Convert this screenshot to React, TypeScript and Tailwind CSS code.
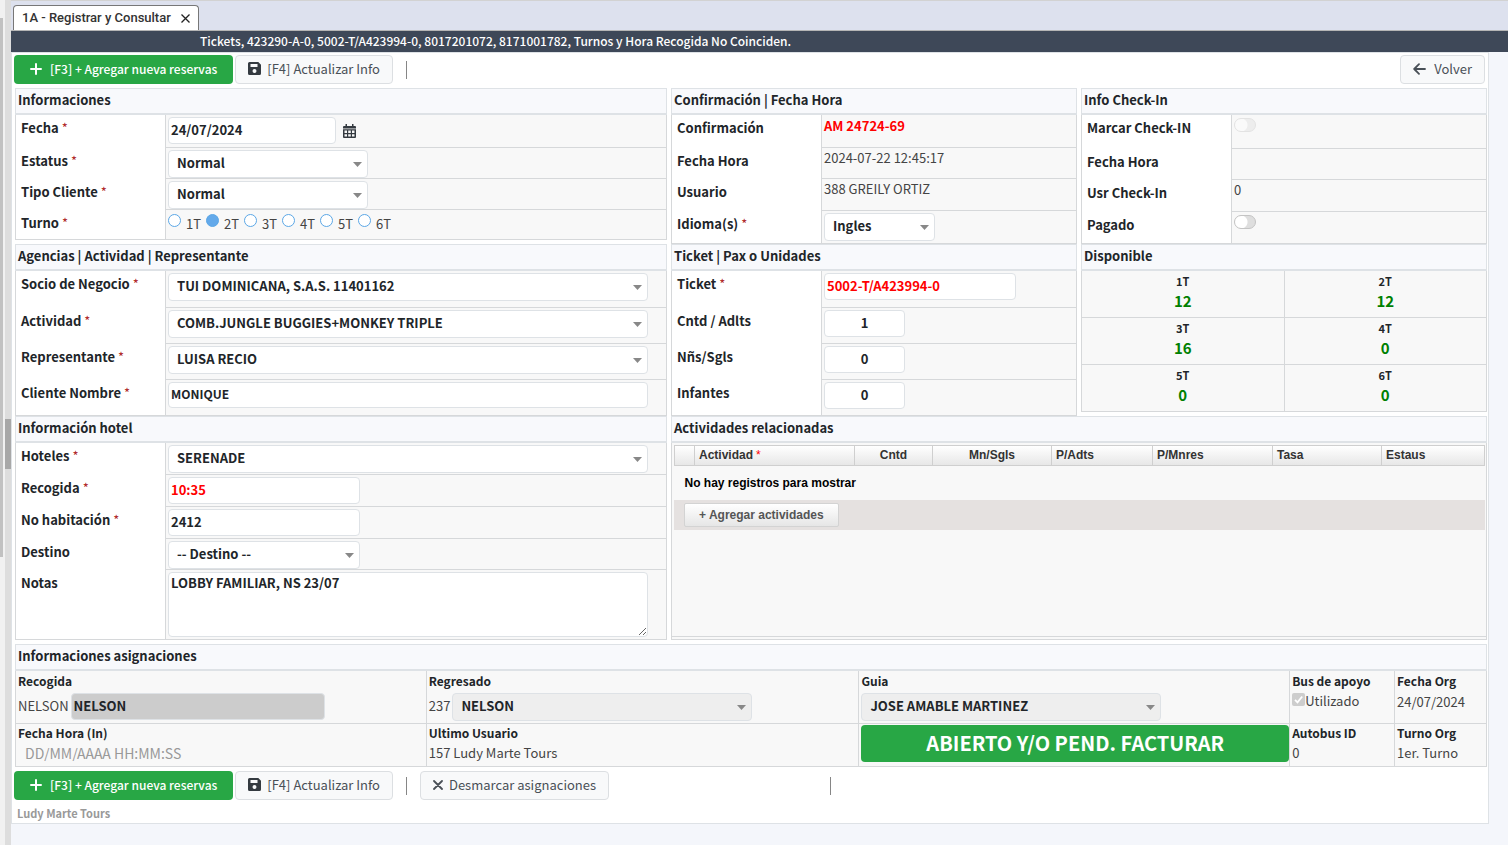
import React from 'react'

const cjk = 'font-["Noto_Sans_CJK_SC","Source_Sans_Pro",sans-serif]'

const box = 'rounded border border-[#dee2e6] font-bold leading-4 outline-none'
const input = `${box} bg-white px-0.5 pb-0.5 text-[13px]`
const inputRed = `${input} text-[#f00]`
const inputNumber = `${box} h-[27px] w-[81px] bg-white pb-0.5 text-center text-[13px]`

function Panel({ title, className = '', children }: { title: string, className?: string, children: React.ReactNode }) {
  return (
    <section className={`flex min-w-0 flex-col ${className}`}>
      <h2 className="h-[27px] shrink-0 border border-b-2 border-[#dee2e6] bg-[#f8f9fc] px-0.5 text-[13px] leading-[22px] font-bold">{title}</h2>
      {children}
    </section>
  )
}

function Field({ label, id, required, height, children }: { label: string, id?: string, required?: boolean, height: string, children?: React.ReactNode }) {
  return (
    <div className={`group flex border-x border-[#d6d8da] ${height}`}>
      <div className="w-[149px] shrink-0 bg-white pt-[5px] pl-[5px] leading-4 font-bold group-last:border-b group-last:border-[#d6d8da]">
        <label htmlFor={id}>
          {label}
          {required && <span className="pl-[3px] align-top leading-4 font-normal text-[#b02a2a]">*</span>}
        </label>
      </div>
      <div className="flex min-w-0 flex-1 items-start border-b border-l border-[#d6d8da] bg-[#f8f8f8] px-0.5 pt-0.5">{children}</div>
    </div>
  )
}

function Select({ id, value, width, disabled }: { id: string, value: string, width: string, disabled?: boolean }) {
  return (
    <span className={`relative inline-block ${width}`}>
      <select
        id={id}
        disabled={disabled}
        className={`${box} block h-7 w-full appearance-none pr-5 pb-0.5 pl-2 text-[13px] opacity-100 ${disabled ? 'bg-[#eeeeee]' : 'bg-white'}`}
      >
        <option>{value}</option>
      </select>
      <svg className="pointer-events-none absolute top-3 right-1.5" width="9" height="5" viewBox="0 0 9 5">
        <path d="M0 0h9L4.5 5z" fill="#888" />
      </svg>
    </span>
  )
}

function PlusIcon() {
  return (
    <svg width="12" height="12" viewBox="0 0 12 12" fill="none" stroke="currentColor" strokeWidth="2" strokeLinecap="round">
      <path d="M6 1v10M1 6h10" />
    </svg>
  )
}

function SaveIcon() {
  return (
    <svg width="13" height="13" viewBox="0 0 13 13">
      <path fillRule="evenodd" fill="#343a40" d="M1.5 0h8.8L13 2.7v8.8a1.5 1.5 0 0 1-1.5 1.5h-10A1.5 1.5 0 0 1 0 11.5v-10A1.5 1.5 0 0 1 1.5 0zM2.500 2v3h7V2zM6.500 7a2 2 0 1 0 0 4 2 2 0 0 0 0-4z" />
    </svg>
  )
}

function CalendarIcon() {
  return (
    <svg width="13" height="14" viewBox="0 0 13 14">
      <path fill="#343a40" d="M2.500 0h1.500v2H9V0h1.500v2H12a1 1 0 0 1 1 1v1.500H0V3a1 1 0 0 1 1-1h1.500zM0 5.300h13V13a1 1 0 0 1-1 1H1a1 1 0 0 1-1-1z" />
      <path fill="#f8f8f8" d="M1.500 6.500h2.500v2.500H1.500zM5.200 6.500h2.600v2.500H5.200zM9 6.500h2.500v2.500H9zM1.500 10.200h2.500v2.300H1.500zM5.200 10.200h2.600v2.300H5.200zM9 10.200h2.500v2.300H9z" />
    </svg>
  )
}

const lightButton = 'flex h-[29px] items-center rounded border border-[#dcdfe2] bg-[#f8f9fa] px-3 pb-0.5 text-[13px] leading-4 text-[#495057]'

function MainButtons() {
  return (
    <>
      <button className="flex h-[29px] items-center gap-2 rounded bg-[#28a745] px-4 pb-0.5 text-[12px] leading-4 font-medium text-white">
        <PlusIcon />
        [F3] + Agregar nueva reservas
      </button>
      <button className={`${lightButton} ml-0.5 gap-1.5`}>
        <SaveIcon />
        [F4] Actualizar Info
      </button>
      <span className="ml-[13px] h-[18px] w-px bg-[#868686]" />
    </>
  )
}

function Toggle({ id, disabled }: { id: string, disabled?: boolean }) {
  return (
    <input
      id={id}
      type="checkbox"
      role="switch"
      disabled={disabled}
      className="mt-px h-3.5 w-[22px] appearance-none rounded-full border border-[#c4c4c4] bg-[#dedede] bg-[radial-gradient(circle_at_6px_6px,#fff_6px,transparent_7px)] disabled:opacity-40"
    />
  )
}

const turnos = ['1T', '2T', '3T', '4T', '5T', '6T']

const disponibles = [
  { turno: '1T', cantidad: 12 },
  { turno: '2T', cantidad: 12 },
  { turno: '3T', cantidad: 16 },
  { turno: '4T', cantidad: 0 },
  { turno: '5T', cantidad: 0 },
  { turno: '6T', cantidad: 0 },
]

const columnas = [
  { titulo: '', ancho: 'w-5' },
  { titulo: 'Actividad', ancho: 'w-[160px]' },
  { titulo: 'Cntd', ancho: 'w-[78px] text-center' },
  { titulo: 'Mn/Sgls', ancho: 'w-[119px] text-center' },
  { titulo: 'P/Adts', ancho: 'w-[101px]' },
  { titulo: 'P/Mnres', ancho: 'w-[120px]' },
  { titulo: 'Tasa', ancho: 'w-[109px]' },
  { titulo: 'Estaus', ancho: '' },
]

export default function App() {
  return (
    <div className={`flex min-h-screen bg-[#f4f6fb] text-[13px] leading-4 text-[#212529] ${cjk}`}>
      <div className="w-[3px] shrink-0 bg-[#f1f1f1] pt-[18px]">
        <div className="h-[539px] bg-[#c1c1c1]" />
      </div>
      <div className="w-0.5 shrink-0 bg-[#f1f1f1]" />
      <div className="w-1.5 shrink-0 bg-[#dddddd] pt-[419px]">
        <div className="h-[50px] bg-[#a8a8a8]" />
      </div>

      <main className="min-w-0 flex-1">
        <div className="flex h-[31px] items-end border-t border-b border-t-[#d2d2d2] border-b-[#b5b5b5] bg-[#dde1ee] pl-0.5">
          <div className="flex h-[25px] items-center gap-2.5 rounded-t border border-b-0 border-[#777] bg-white px-2 font-['Roboto',sans-serif] text-[13px] font-medium text-[#333]">
            1A - Registrar y Consultar
            <button aria-label="Cerrar">
              <svg width="9" height="9" viewBox="0 0 9 9" stroke="#222" strokeWidth="1.300">
                <path d="M.5.5l8 8M8.500.5l-8 8" />
              </svg>
            </button>
          </div>
        </div>
        <div className="h-[21px] bg-[#3e4858] pl-[189px] text-[12px] leading-[19px] font-medium text-white">
          Tickets, 423290-A-0, 5002-T/A423994-0, 8017201072, 8171001782, Turnos y Hora Recogida No Coinciden.
        </div>

        <div className="mr-[19px] border border-[#dee2e6] bg-white pr-px pb-0.5">
          <div className="flex h-[35px] items-center pb-0.5 pl-0.5">
            <MainButtons />
            <button className={`${lightButton} mr-0.5 ml-auto gap-2`}>
              <svg width="13" height="12" viewBox="0 0 13 12" fill="none" stroke="currentColor" strokeWidth="1.800" strokeLinecap="round" strokeLinejoin="round">
                <path d="M12 6H1.500M6 1.200L1.200 6 6 10.800" />
              </svg>
              Volver
            </button>
          </div>

          <div className="pl-[3px]">
            <div className="grid grid-cols-[652fr_406fr_406fr] gap-x-1">
              <Panel title="Informaciones">
                <Field label="Fecha" id="fecha" required height="h-[33px]">
                  <input id="fecha" className={`${input} h-[27px] w-[168px]`} defaultValue="24/07/2024" />
                  <button aria-label="Abrir calendario" className="mt-[7px] ml-[7px]">
                    <CalendarIcon />
                  </button>
                </Field>
                <Field label="Estatus" id="estatus" required height="h-[31px]">
                  <Select id="estatus" value="Normal" width="w-[200px]" />
                </Field>
                <Field label="Tipo Cliente" id="tipo" required height="h-[31px]">
                  <Select id="tipo" value="Normal" width="w-[200px]" />
                </Field>
                <Field label="Turno" required height="h-[30px]">
                  <div className="flex pt-0.5">
                    {turnos.map((t) => (
                      <label key={t} className="flex w-[38px] gap-[5px] text-[#444]">
                        <input
                          type="radio"
                          name="turno"
                          defaultChecked={t === '2T'}
                          className="size-[13px] shrink-0 appearance-none rounded-full border border-[#5ba7e6] bg-white checked:bg-[#63a9ea]"
                        />
                        <span className="pt-0.5">{t}</span>
                      </label>
                    ))}
                  </div>
                </Field>
              </Panel>

              <Panel title="Confirmación | Fecha Hora">
                <Field label="Confirmación" height="h-[33px]">
                  <span className="pt-px font-bold text-[#f00]">AM 24724-69</span>
                </Field>
                <Field label="Fecha Hora" height="h-[31px]">
                  <span className="text-[#444]">2024-07-22 12:45:17</span>
                </Field>
                <Field label="Usuario" height="h-[32px]">
                  <span className="text-[#444]">388 GREILY ORTIZ</span>
                </Field>
                <Field label="Idioma(s)" id="idioma" required height="h-[33px]">
                  <Select id="idioma" value="Ingles" width="w-[111px]" />
                </Field>
              </Panel>

              <Panel title="Info Check-In">
                <Field label="Marcar Check-IN" id="checkin" height="h-[34px]">
                  <Toggle id="checkin" disabled />
                </Field>
                <Field label="Fecha Hora" height="h-[31px]" />
                <Field label="Usr Check-In" height="h-[32px]">
                  <span className="text-[#444]">0</span>
                </Field>
                <Field label="Pagado" id="pagado" height="h-[32px]">
                  <Toggle id="pagado" />
                </Field>
              </Panel>

              <Panel title="Agencias | Actividad | Representante">
                <Field label="Socio de Negocio" id="socio" required height="h-[37px]">
                  <Select id="socio" value="TUI DOMINICANA, S.A.S. 11401162" width="w-[480px]" />
                </Field>
                <Field label="Actividad" id="actividad" required height="h-[36px]">
                  <Select id="actividad" value="COMB.JUNGLE BUGGIES+MONKEY TRIPLE" width="w-[480px]" />
                </Field>
                <Field label="Representante" id="representante" required height="h-[36px]">
                  <Select id="representante" value="LUISA RECIO" width="w-[480px]" />
                </Field>
                <Field label="Cliente Nombre" id="cliente" required height="h-[36px]">
                  <input id="cliente" className={`${box} h-[26px] w-[480px] bg-white px-0.5 pb-1 text-[12px]`} defaultValue="MONIQUE" />
                </Field>
              </Panel>

              <Panel title="Ticket | Pax o Unidades">
                <Field label="Ticket" id="ticket" required height="h-[37px]">
                  <input id="ticket" className={`${inputRed} h-[27px] w-[192px]`} defaultValue="5002-T/A423994-0" />
                </Field>
                <Field label="Cntd / Adlts" id="adultos" height="h-[36px]">
                  <input id="adultos" className={inputNumber} defaultValue="1" />
                </Field>
                <Field label="Nñs/Sgls" id="ninos" height="h-[36px]">
                  <input id="ninos" className={inputNumber} defaultValue="0" />
                </Field>
                <Field label="Infantes" id="infantes" height="h-[36px]">
                  <input id="infantes" className={inputNumber} defaultValue="0" />
                </Field>
              </Panel>

              <Panel title="Disponible">
                <div className="grid grid-cols-2 border-l border-[#d6d8da] bg-[#f8f8f8] text-center font-bold">
                  {disponibles.map((d) => (
                    <div key={d.turno} className="h-[47px] border-r border-b border-[#d6d8da] pt-1">
                      <div className="text-[11px] leading-3">{d.turno}</div>
                      <div className="pt-1 text-[15px] leading-5 text-[#008000]">{d.cantidad}</div>
                    </div>
                  ))}
                </div>
              </Panel>
            </div>

            <div className="grid grid-cols-[652fr_816fr] gap-x-1">
              <Panel title="Información hotel">
                <Field label="Hoteles" id="hotel" required height="h-[32px]">
                  <Select id="hotel" value="SERENADE" width="w-[480px]" />
                </Field>
                <Field label="Recogida" id="recogida" required height="h-[32px]">
                  <input id="recogida" className={`${inputRed} h-[27px] w-[192px]`} defaultValue="10:35" />
                </Field>
                <Field label="No habitación" id="habitacion" required height="h-[32px]">
                  <input id="habitacion" className={`${input} h-[27px] w-[192px]`} defaultValue="2412" />
                </Field>
                <Field label="Destino" id="destino" height="h-[31px]">
                  <Select id="destino" value="-- Destino --" width="w-[192px]" />
                </Field>
                <Field label="Notas" id="notas" height="h-[70px]">
                  <textarea id="notas" className={`${input} h-[65px] w-[480px] pt-0.5`} defaultValue="LOBBY FAMILIAR, NS 23/07" />
                </Field>
              </Panel>

              <Panel title="Actividades relacionadas">
                <div className="flex-1 border border-t-0 border-[#d6d8da] bg-[#f8f8f8] pb-0.5 font-['Liberation_Sans',sans-serif] text-[12px]">
                  <div className="h-full border-b border-[#d6d8da] pt-0.5 pr-px pl-0.5">
                    <table className="w-full table-fixed border-collapse">
                      <thead>
                        <tr className="h-5 bg-linear-to-b from-white to-[#e6e6e6] text-left text-[#333]">
                          {columnas.map((c) => (
                            <th key={c.titulo} className={`border border-[#cfcfcf] px-1 pb-px leading-[18px] font-bold ${c.ancho}`}>
                              {c.titulo}
                              {c.titulo === 'Actividad' && <span className="pl-[3px] align-top font-normal text-[#f00]">*</span>}
                            </th>
                          ))}
                        </tr>
                      </thead>
                      <tbody>
                        <tr>
                          <td colSpan={8} className="h-[34px] px-2.5 font-bold text-black">No hay registros para mostrar</td>
                        </tr>
                      </tbody>
                    </table>
                    <div className="flex h-[30px] items-center bg-[#e5e1e0] px-2.5">
                      <button className="h-6 rounded-xs border border-[#d3d3d3] bg-linear-to-b from-white to-[#e6e6e6] px-3.5 font-bold text-[#555]">+ Agregar actividades</button>
                    </div>
                  </div>
                </div>
              </Panel>
            </div>

            <Panel title="Informaciones asignaciones" className="pt-1">
              <div className="grid grid-cols-[411fr_433fr_431fr_105fr_92fr] grid-rows-[53px_43px] border-l border-[#d6d8da] bg-[#f8f8f8] text-[#444] *:min-w-0 *:border-r *:border-b *:border-[#d6d8da] *:pl-0.5">
                <div>
                  <label htmlFor="rec" className="block pt-0.5 text-[12px] font-bold text-[#212529]">Recogida</label>
                  <div className="flex items-center gap-0.5 pt-1">
                    <span className="pb-0.5">NELSON</span>
                    <input id="rec" disabled className={`${box} h-[27px] w-[254px] bg-[#cccccc] px-0.5 pb-0.5 text-[13px] text-[#212529]`} defaultValue="NELSON" />
                  </div>
                </div>
                <div>
                  <label htmlFor="reg" className="block pt-0.5 text-[12px] font-bold text-[#212529]">Regresado</label>
                  <div className="flex items-center gap-0.5 pt-1 text-[#212529]">
                    <span className="pb-0.5 text-[#444]">237</span>
                    <Select id="reg" value="NELSON" width="w-[300px]" disabled />
                  </div>
                </div>
                <div>
                  <label htmlFor="guia" className="block pt-0.5 text-[12px] font-bold text-[#212529]">Guia</label>
                  <div className="pt-1 text-[#212529]">
                    <Select id="guia" value="JOSE AMABLE MARTINEZ" width="w-[300px]" disabled />
                  </div>
                </div>
                <div>
                  <div className="pt-0.5 text-[12px] font-bold text-[#212529]">Bus de apoyo</div>
                  <label className="relative flex items-start pt-1">
                    <input type="checkbox" disabled defaultChecked className="sr-only" />
                    <svg width="13" height="13" viewBox="0 0 13 13">
                      <rect width="13" height="13" rx="2" fill="#cdcdcd" />
                      <path d="M3 6.800l2.500 2.500L10.200 3.500" fill="none" stroke="#fff" strokeWidth="1.800" />
                    </svg>
                    Utilizado
                  </label>
                </div>
                <div>
                  <div className="pt-0.5 text-[12px] font-bold text-[#212529]">Fecha Org</div>
                  <div className="pt-[5px]">24/07/2024</div>
                </div>

                <div>
                  <label htmlFor="entrada" className="block pt-px text-[12px] font-bold text-[#212529]">Fecha Hora (In)</label>
                  <input id="entrada" placeholder="DD/MM/AAAA HH:MM:SS" className="mt-1 block h-4 w-[200px] pl-[7px] text-sm leading-4 outline-none placeholder:text-[#999]" />
                </div>
                <div>
                  <div className="pt-px text-[12px] font-bold text-[#212529]">Ultimo Usuario</div>
                  <div className="pt-1">157 Ludy Marte Tours</div>
                </div>
                <div className="pt-px">
                  <button className="block h-[37px] w-full rounded bg-[#28a745] pb-0.5 text-[20px] leading-6 font-bold text-white">ABIERTO Y/O PEND. FACTURAR</button>
                </div>
                <div>
                  <div className="pt-px text-[12px] font-bold text-[#212529]">Autobus ID</div>
                  <div className="pt-1">0</div>
                </div>
                <div>
                  <div className="pt-px text-[12px] font-bold text-[#212529]">Turno Org</div>
                  <div className="pt-1">1er. Turno</div>
                </div>
              </div>
            </Panel>
          </div>

          <div className="flex items-center pt-1 pl-0.5">
            <MainButtons />
            <button className={`${lightButton} ml-[13px] gap-1.5`}>
              <svg width="10" height="10" viewBox="0 0 10 10" stroke="currentColor" strokeWidth="1.800" strokeLinecap="round">
                <path d="M1 1l8 8M9 1L1 9" />
              </svg>
              Desmarcar asignaciones
            </button>
            <span className="ml-[221px] h-[18px] w-px bg-[#868686]" />
          </div>
          <div className="pt-[5px] pl-[5px] text-[11px] leading-4 font-bold text-[#999]">Ludy Marte Tours</div>
        </div>
      </main>
    </div>
  )
}
